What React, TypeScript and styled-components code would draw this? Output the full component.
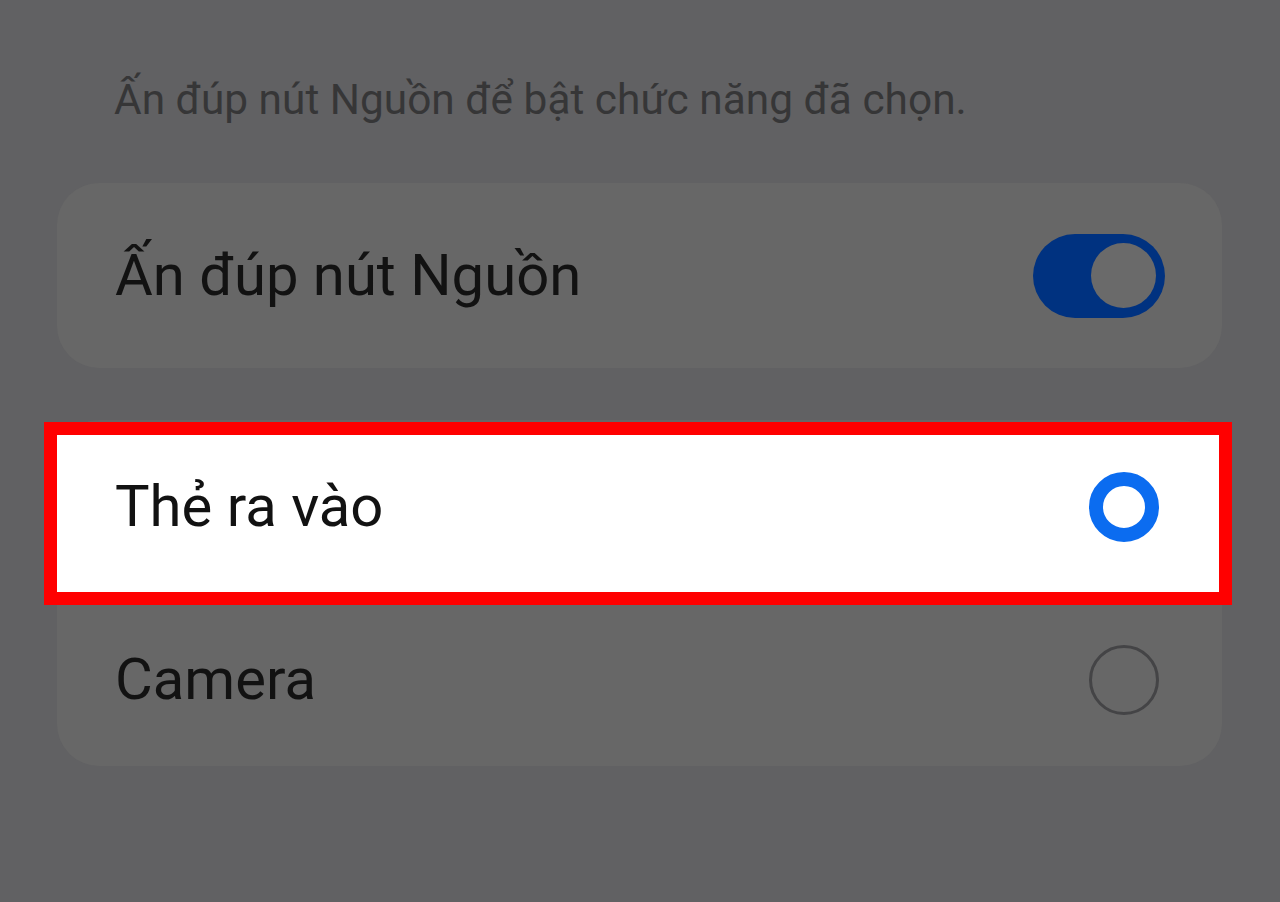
import styled, { createGlobalStyle } from 'styled-components'

const GlobalStyle = createGlobalStyle`
  html, body {
    margin: 0;
    padding: 0;
    background: #616163;
  }
  body {
    font-family: Roboto, "Liberation Sans", Arial, sans-serif;
  }
`

const Page = styled.div`
  width: 1280px;
  height: 902px;
  box-sizing: border-box;
  padding: 75px 58px 0 57px;
  display: flex;
  flex-direction: column;
  background: #616163;
  overflow: hidden;
`

const Description = styled.p`
  margin: 0 0 58px;
  padding-left: 57px;
  height: 50px;
  font-size: 42.4px;
  line-height: 50px;
  color: #363637;
  white-space: nowrap;
`

const Card = styled.div`
  display: flex;
  flex-direction: column;
  background: #676767;
  border-radius: 42px;
  & + & {
    margin-top: 52px;
  }
`

const Row = styled.div<{ $height: number }>`
  position: relative;
  height: ${(p) => p.$height}px;
  display: flex;
  align-items: center;
  justify-content: space-between;
  padding: 0 57px 0 58px;
`

/* annotation drawn over the selected row */
const Highlight = styled.div`
  position: absolute;
  top: 15px;
  left: 0;
  right: 3px;
  bottom: 1px;
  background: #ffffff;
  outline: 13px solid #ff0000;
`

const Label = styled.span`
  position: relative;
  font-size: 58px;
  line-height: 1.2;
  color: #121212;
  white-space: nowrap;
`

const Toggle = styled.div`
  width: 132px;
  height: 84px;
  border-radius: 42px;
  background: #003280;
  display: flex;
  align-items: center;
  justify-content: flex-end;
  padding-right: 9px;
  box-sizing: border-box;
`

const Knob = styled.div`
  width: 65px;
  height: 65px;
  border-radius: 50%;
  background: #6a6a6a;
`

const Radio = styled.div<{ $checked?: boolean }>`
  position: relative;
  width: 70px;
  height: 70px;
  margin-right: 6px;
  border-radius: 50%;
  box-sizing: border-box;
  border: ${(p) => (p.$checked ? '14px solid #0b6cf0' : '3px solid #444446')};
  background: transparent;
`

export default function App() {
  return (
    <>
      <GlobalStyle />
      <Page>
        <Description>Ấn đúp nút Nguồn để bật chức năng đã chọn.</Description>
        <Card>
          <Row $height={185}>
            <Label>Ấn đúp nút Nguồn</Label>
            <Toggle>
              <Knob />
            </Toggle>
          </Row>
        </Card>
        <Card>
          <Row $height={173}>
            <Highlight />
            <Label>Thẻ ra vào</Label>
            <Radio $checked />
          </Row>
          <Row $height={173}>
            <Label>Camera</Label>
            <Radio />
          </Row>
        </Card>
      </Page>
    </>
  )
}
